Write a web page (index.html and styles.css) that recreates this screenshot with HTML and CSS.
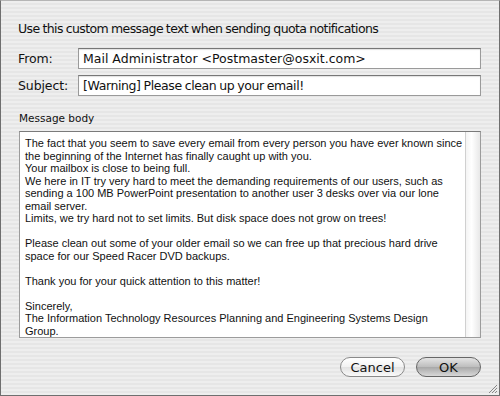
FILE: index.html
```html
<!DOCTYPE html>
<html lang="en">
<head>
  <meta charset="UTF-8" />
  <title>Quota notification message</title>
  <link rel="stylesheet" href="styles.css">
</head>
<body>

  <!-- Sheet -->
  <div class="sheet">
    <p class="intro">Use this custom message text when sending quota notifications</p>

    <div class="field-row">
      <label for="from">From:</label>
      <div class="field" id="from">Mail Administrator &lt;Postmaster@osxit.com&gt;</div>
    </div>
    <div class="field-row">
      <label for="subject">Subject:</label>
      <div class="field" id="subject">[Warning] Please clean up your email!</div>
    </div>

    <p class="body-label">Message body</p>

    <div class="body-box">
      <div class="body-text">
        <p>The fact that you seem to save every email from every person you have ever known since the beginning of the Internet has finally caught up with you.</p>
        <p>Your mailbox is close to being full.</p>
        <p>We here in IT try very hard to meet the demanding requirements of our users, such as sending a 100 MB PowerPoint presentation to another user 3 desks over via our lone email server.</p>
        <p>Limits, we try hard not to set limits. But disk space does not grow on trees!</p>
        <p class="gap">Please clean out some of your older email so we can free up that precious hard drive space for our Speed Racer DVD backups.</p>
        <p class="gap">Thank you for your quick attention to this matter!</p>
        <p class="gap">Sincerely,</p>
        <p>The Information Technology Resources Planning and Engineering Systems Design<br>Group.</p>
      </div>
      <div class="scroll-track"></div>
    </div>

    <div class="buttons">
      <button class="btn btn-cancel">Cancel</button>
      <button class="btn btn-ok">OK</button>
    </div>

    <!-- resize grip -->
    <svg class="grip" viewBox="0 0 12 12">
      <path d="M11 3 L3 11 M11 6 L6 11 M11 9 L9 11" stroke="#888" stroke-width="1" fill="none" />
    </svg>
  </div>

</body>
</html>
```

FILE: styles.css
```css
* {
  box-sizing: border-box;
  margin: 0;
  padding: 0;
}
body {
  font-family: "DejaVu Sans", "Liberation Sans", sans-serif;
  color: #111;
}

/* Sheet */
.sheet {
  position: relative;
  width: 500px;
  height: 396px;
  border: 1px solid #6f6f6f;
  border-top-color: #b5b5b5;
  background: #ececec repeating-linear-gradient(to bottom, #eeeeee 0, #eeeeee 2px, #e6e6e6 2px, #e6e6e6 4px);
  padding: 20px 18px 0 17px;
}
.intro {
  font-size: 12.5px;
  letter-spacing: -0.6px;
  word-spacing: -0.5px;
  line-height: 16px;
  margin-bottom: 11px;
}

/* From / Subject */
.field-row {
  display: flex;
  align-items: center;
  margin-bottom: 6px;
}
.field-row label {
  width: 60px;
  font-size: 12.5px;
  letter-spacing: -0.1px;
}
.field {
  flex: 1;
  height: 21px;
  background: #fff;
  border: 1px solid #9a9a9a;
  border-top-color: #777;
  box-shadow: inset 0 1px 1px rgba(0,0,0,0.12);
  font-size: 12.5px;
  line-height: 19px;
  padding-left: 4px;
}
#subject {
  letter-spacing: -0.4px;
  word-spacing: -0.6px;
}

/* Message body */
.body-label {
  font-size: 10.5px;
  margin: 16px 0 7px 1px;
}
.body-box {
  display: flex;
  height: 207px;
  margin-left: 1px;
  background: #fff;
  border: 1px solid #9c9c9c;
  border-top-color: #7a7a7a;
}
.body-text {
  flex: 1;
  padding: 5px 0 0 5px;
  font-family: "Liberation Sans", Arial, sans-serif;
  font-size: 11px;
  line-height: 12.5px;
}
.body-text .gap {
  margin-top: 12.5px;
}
.scroll-track {
  width: 15px;
  border-left: 1px solid #d0d0d0;
  background: linear-gradient(to right, #f4f4f4, #ffffff 40%, #e8e8e8);
}

/* Buttons */
.buttons {
  display: flex;
  justify-content: flex-end;
  gap: 11px;
  margin-top: 19px;
}
.btn {
  width: 65px;
  height: 20px;
  border-radius: 10px;
  font-family: "DejaVu Sans", sans-serif;
  font-size: 13px;
  color: #111;
  cursor: pointer;
}
.btn-cancel {
  border: 1px solid #8a8a8a;
  background: linear-gradient(to bottom, #ffffff 0%, #f2f2f2 50%, #e2e2e2 51%, #fafafa 100%);
}
.btn-ok {
  border: 1px solid #666;
  background: linear-gradient(to bottom, #e4e4e4 0%, #bdbdbd 50%, #a8a8a8 51%, #d8d8d8 100%);
}

.grip {
  position: absolute;
  right: 1px;
  bottom: 1px;
  width: 12px;
  height: 12px;
}
```
